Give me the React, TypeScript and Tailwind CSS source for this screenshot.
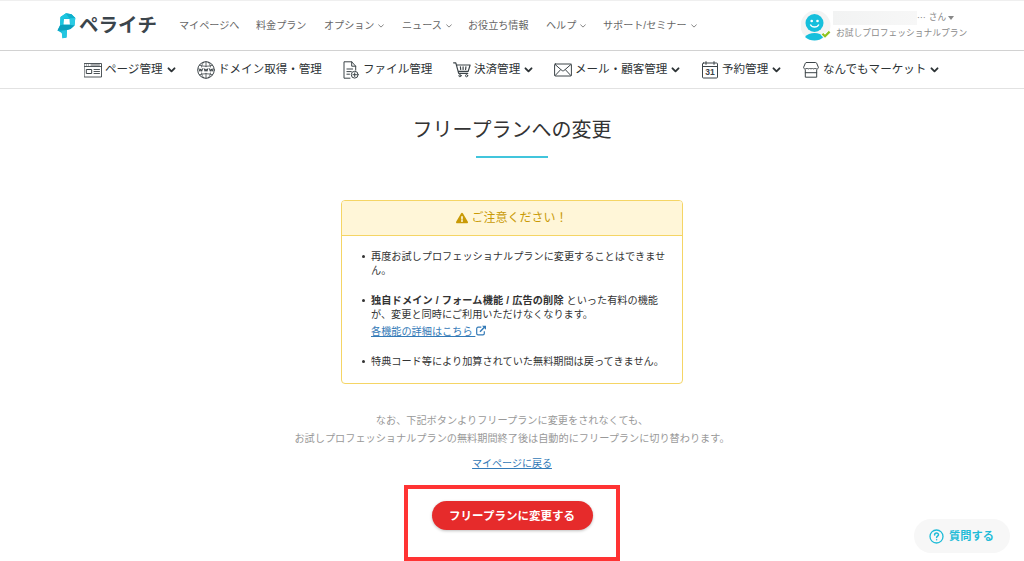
import React from "react";
import { FaExclamationTriangle } from "react-icons/fa";

interface NavItem {
  label: string;
  width: string;
  arrow?: boolean;
}

interface ToolItem extends NavItem {
  icon: React.ReactNode;
}

const NAV_ITEMS: NavItem[] = [
  { label: "マイページへ", width: "w-[77px]" },
  { label: "料金プラン", width: "w-[68px]" },
  { label: "オプション", width: "w-[78px]", arrow: true },
  { label: "ニュース", width: "w-[66px]", arrow: true },
  { label: "お役立ち情報", width: "w-[78px]" },
  { label: "ヘルプ", width: "w-[57px]", arrow: true },
  { label: "サポート/セミナー", width: "w-[110px]", arrow: true },
];

const TOOL_ITEMS: ToolItem[] = [
  { label: "ページ管理", width: "w-[113px]", arrow: true, icon: <PageIcon /> },
  { label: "ドメイン取得・管理", width: "w-[145px]", icon: <GlobeIcon /> },
  { label: "ファイル管理", width: "w-[111px]", icon: <FileIcon /> },
  { label: "決済管理", width: "w-[101px]", arrow: true, icon: <CartIcon /> },
  { label: "メール・顧客管理", width: "w-[147px]", arrow: true, icon: <MailIcon /> },
  { label: "予約管理", width: "w-[101px]", arrow: true, icon: <CalendarIcon /> },
  { label: "なんでもマーケット", width: "w-[140px]", arrow: true, icon: <ShopIcon /> },
];

function Icon({ children }: { children: React.ReactNode }) {
  return (
    <svg className="h-[18px] w-[18px] shrink-0" viewBox="0 0 18 18" fill="none" stroke="#3c4448" strokeWidth="1" strokeLinecap="round" strokeLinejoin="round">
      {children}
    </svg>
  );
}

function PageIcon() {
  return (
    <Icon>
      <path d="M.5 2.500h17v13.500H.5zM.5 5.500h17M10 8.500h5.500M10 10.500h5.500M10 12.500h5.500M2.300 4h.2M4.300 4h.2M7 4h8.500" strokeWidth=".9" />
      <path d="M2.700 8.500h5v4h-5z" />
    </Icon>
  );
}

function GlobeIcon() {
  return (
    <Icon>
      <circle cx="9" cy="9" r="8.300" />
      <path d="M9 .7v5M9 12.300v5M2.500 4.200c3.800 1.500 9.200 1.500 13 0M2.500 13.800c3.800-1.500 9.200-1.500 13 0M6.700 1.200C5.400 2.600 4.800 4 4.600 6M11.300 1.200c1.300 1.400 1.900 2.800 2.100 4.800M6.700 16.800c-1.300-1.400-1.900-2.800-2.100-4.800M11.300 16.800c1.300-1.400 1.900-2.800 2.100-4.800" strokeWidth=".8" />
      <path d="M2 7.700l.9 2.600.9-2.400.9 2.400.9-2.600M7.200 7.700l.9 2.600.9-2.400.9 2.400.9-2.600M12.400 7.700l.9 2.600.9-2.400.9 2.400.9-2.600" />
    </Icon>
  );
}

function FileIcon() {
  return (
    <Icon>
      <path d="M8 17.200H2V.8h7.700l4 4.400v4M9.700.8v4.400h4M4.900 8h5.800M4.900 10.600h4.400M4.900 13.200h2.600" />
      <circle cx="12.700" cy="13.700" r="3.400" />
      <path d="M12.700 11.900v3.600M10.900 13.700h3.600" />
    </Icon>
  );
}

function CartIcon() {
  return (
    <Icon>
      <path d="M.6 1.800h2.200l2.900 10.600h9M3.500 4h13.600l-1.900 6.300H5.200M7.400 5.900l.3 2.600M10.100 5.900v2.600M12.900 5.900l-.3 2.600" strokeWidth="1.200" />
      <circle cx="7" cy="14.700" r="1.100" />
      <circle cx="13.600" cy="14.700" r="1.100" />
    </Icon>
  );
}

function MailIcon() {
  return (
    <Icon>
      <rect x=".6" y="3" width="16.800" height="12" rx=".8" />
      <path d="M1 3.400l6.800 6c.7.6 1.700.6 2.400 0l6.800-6M1 14.700l5.600-6M17 14.700l-5.600-6" />
    </Icon>
  );
}

function CalendarIcon() {
  return (
    <Icon>
      <rect x="1.500" y="2" width="15" height="15" rx="1" />
      <path d="M1.500 5.500h15M5 .6v2.800M13 .6v2.800" />
      <text x="9" y="14.300" textAnchor="middle" fontSize="8.500" fontWeight="700" fill="#3c4448" stroke="none" fontFamily="Liberation Sans, sans-serif">
        31
      </text>
    </Icon>
  );
}

function ShopIcon() {
  return (
    <Icon>
      <path d="M4.400 1.500h9.200c.5 0 .8.2 1 .6l1.700 4c.3 1.100-.4 1.900-1.400 1.900-.9 0-1.500-.3-1.900-1-.4.600-.8.900-1.400.9s-1-.3-1.300-.9c-.4.600-.8.900-1.300.9s-.9-.3-1.300-.9c-.3.600-.7.900-1.300.9S5.400 7.600 5 7c-.4.700-1 1-1.900 1-1 0-1.700-.8-1.400-1.900l1.700-4c.2-.4.500-.6 1-.6z" />
      <path d="M3.300 9v7.200h11.400V9M3.300 11.700h11.400" />
    </Icon>
  );
}

function Logo() {
  return (
    <div className="flex w-[122px] items-center">
      <svg className="mr-[3px] h-[26px] w-[19px] shrink-0" viewBox="0 0 19 26">
        <path d="M3.500 4 9 .3l5.500 1L18.300 5l-.8 7.500-4 3.500-3.500 1-.5 7.500-4 .8L4.800 20 .5 17.500l2.500-5z" fill="#12b7d4" />
        <path d="M3.500 4 9 .3l3.500 5.200H7L6.500 12H3z" fill="#1cc6e0" />
        <path d="M9 .3l5.500 1L18.300 5l-5.800.5z" fill="#0fb0cc" />
        <path d="M12.500 5.500L18.300 5l-.8 7.500-4 .5z" fill="#2acbe4" />
        <path d="M3 12.500l3.500-1 6.500.5 4.500.5-4 3.500-3.500 1-9.500.5z" fill="#0a9fbd" />
        <path d="M4.500 18l5.500-1-.5 7.500-4 .8L4.800 20z" fill="#23c6e0" />
        <path d="M7 6h5.500l.4 5.500H6.500z" fill="#fff" />
      </svg>
      <span className="text-[19.500px] font-bold leading-none text-[#3b454c]">ペライチ</span>
    </div>
  );
}

function Chevron({ bold }: { bold?: boolean }) {
  return bold ? (
    <svg className="ml-px mt-px h-[6px] w-[9px]" viewBox="0 0 9 6" fill="none" stroke="#2d3336" strokeWidth="1.900" strokeLinecap="round" strokeLinejoin="round">
      <path d="M1.500 1.300l3 3 3-3" />
    </svg>
  ) : (
    <svg className="ml-[4px] mt-px h-[4px] w-[6px]" viewBox="0 0 6 4" fill="none" stroke="#777" strokeWidth=".9">
      <path d="M.4.600l2.600 2.500L5.600.600" />
    </svg>
  );
}

function UserMenu() {
  return (
    <div className="flex items-start pt-[9px]">
      <svg className="h-[31px] w-[32px]" viewBox="0 0 32 31">
        <circle cx="14.500" cy="15.500" r="15" fill="#f4f4f4" />
        <circle cx="13.500" cy="13" r="9" fill="#16bfdc" />
        <path d="M4 27c2-2.700 5.500-4 9.500-4s7 1.300 9 4c-4.500 4.700-13.500 4.700-18.500 0z" fill="#16bfdc" />
        <circle cx="10.700" cy="11" r="1.300" fill="#fff" />
        <circle cx="16.500" cy="11" r="1.300" fill="#fff" />
        <path d="M9.300 14.500c1.800 3.400 6.800 3.400 8.600 0" fill="none" stroke="#fff" strokeWidth="1.400" />
        <path d="M21.500 23.800l2.500 2.400 4.600-4.600" fill="none" stroke="#fff" strokeWidth="4" />
        <path d="M21.500 23.800l2.500 2.400 4.600-4.600" fill="none" stroke="#8fc31f" strokeWidth="2.200" />
      </svg>
      <div className="ml-[3px]">
        <div className="-mt-px flex h-[18px] items-center text-[8.700px] text-[#8a8a8a]">
          <div className="-ml-[3px] h-[14px] w-[84px] bg-gradient-to-r from-[#f2f3f3] to-[#f7f7f7]" />
          <span className="font-['Noto_Sans_CJK_JP',sans-serif]">…</span>
          <span className="ml-[3px]">さん</span>
          <svg className="ml-[2px] h-[4px] w-[6px]" viewBox="0 0 6 4">
            <path d="M0 0h6L3 4z" fill="#888" />
          </svg>
        </div>
        <div className="-mt-px h-[14px] whitespace-nowrap text-[8.750px] leading-[14px] text-[#8a8a8a]">お試しプロフェッショナルプラン</div>
      </div>
    </div>
  );
}

function Bullet({ children }: { children: React.ReactNode }) {
  return (
    <li className="flex">
      <span className="mr-[6px] mt-[5px] h-[3px] w-[3px] shrink-0 rounded-full bg-[#333]" />
      <div>{children}</div>
    </li>
  );
}

function ExternalIcon() {
  return (
    <svg className="ml-px inline-block h-[11px] w-[10px] align-[-1px]" viewBox="0 0 10 11" fill="none" stroke="#337ab7" strokeWidth="1.200">
      <path d="M5.300 2.200H2.100C1.300 2.200.7 2.800.7 3.600v4.800c0 .8.6 1.400 1.400 1.400h4.800c.8 0 1.400-.6 1.400-1.400V6.200" />
      <path d="M4 6.700L8.400 2.300" strokeWidth="1.500" />
      <path d="M6 .7H10v4z" fill="#337ab7" stroke="none" />
    </svg>
  );
}

export default function App() {
  return (
    <div className="relative h-[561px] w-[1024px] overflow-hidden bg-white font-['Liberation_Sans','Noto_Sans_CJK_JP',sans-serif] text-[#333]" lang="ja">
      {/* Global header */}
      <header className="flex h-[51px] border-t border-b border-t-[#efefef] border-b-[#d2d2d2] pl-[57px]">
        <Logo />
        <nav className="flex w-[622px] items-center text-[10.100px] text-[#666]">
          {NAV_ITEMS.map((item) => (
            <a key={item.label} className={`flex shrink-0 items-center whitespace-nowrap ${item.width}`}>
              {item.label}
              {item.arrow && <Chevron />}
            </a>
          ))}
        </nav>
        <UserMenu />
      </header>

      {/* Management menu */}
      <nav className="flex h-[38px] items-center border-b border-[#e2e2e2] pl-[84px] text-[11.550px] text-[#2d3336]">
        {TOOL_ITEMS.map((item) => (
          <a key={item.label} className={`flex shrink-0 items-center gap-[3px] whitespace-nowrap ${item.width}`}>
            {item.icon}
            <span className="pt-px">{item.label}</span>
            {item.arrow && <Chevron bold />}
          </a>
        ))}
      </nav>

      <main className="flex flex-col items-center">
        <h1 className="mt-[26px] text-[20px] leading-[30px]">フリープランへの変更</h1>
        <div className="mt-[11px] h-[2px] w-[72px] bg-[#41c5dc]" />

        <section className="mt-[42px] h-[184px] w-[342px] rounded-[4px] border border-[#f5d565]">
          <div className="flex h-[35px] items-center justify-center rounded-t-[3px] border-b border-[#f5d565] bg-[#fff6d8] text-[12px] text-[#c99a06]">
            <FaExclamationTriangle className="mr-[3px] h-[12px] w-[12px]" />
            ご注意ください！
          </div>
          <ul className="flex flex-col gap-[16px] pl-[20px] pt-[14px] text-[10.170px] leading-[14px]">
            <Bullet>
              再度お試しプロフェッショナルプランに変更することはできませ
              <br />
              ん。
            </Bullet>
            <Bullet>
              <b className="tracking-[0.150px]">独自ドメイン / フォーム機能 / 広告の削除</b> といった有料の機能
              <br />
              が、変更と同時にご利用いただけなくなります。
              <div className="mt-[3px]">
                <a className="text-[#337ab7] underline">各機能の詳細はこちら </a>
                <ExternalIcon />
              </div>
            </Bullet>
            <Bullet>特典コード等により加算されていた無料期間は戻ってきません。</Bullet>
          </ul>
        </section>

        <p className="mt-[28px] whitespace-nowrap text-center text-[10.170px] leading-[17.500px] text-[#999]">
          なお、下記ボタンよりフリープランに変更をされなくても、
          <br />
          お試しプロフェッショナルプランの無料期間終了後は自動的にフリープランに切り替わります。
        </p>
        <a className="mt-[9px] text-[10px] leading-[15px] text-[#337ab7] underline">マイページに戻る</a>

        <div className="mt-[14px] flex h-[76px] w-[216px] justify-center border-[4px] border-[#ff3333] pt-[12px]">
          <button className="h-[29px] w-[161px] rounded-full bg-[#e62b2b] pt-[2px] text-[11.500px] font-bold text-white shadow-[0_1px_3px_rgba(0,0,0,0.25)]">
            フリープランに変更する
          </button>
        </div>
      </main>

      {/* Floating help button */}
      <button className="absolute right-[14px] bottom-[8px] flex h-[34px] w-[96px] items-center justify-center rounded-full bg-[#f7f7f7] pr-px text-[11.200px] font-bold text-[#1fbcd8]">
        <svg className="mr-[5px] h-[15px] w-[15px]" viewBox="0 0 15 15" fill="none" stroke="#1fbcd8" strokeWidth="1.300" strokeLinecap="round">
          <circle cx="7.500" cy="7.500" r="6.500" />
          <path d="M5.600 6c0-2.600 3.900-2.500 3.900-.2 0 1.300-1.900 1.400-1.900 2.700M7.600 10.700v.1" strokeWidth="1.500" />
        </svg>
        質問する
      </button>
    </div>
  );
}
